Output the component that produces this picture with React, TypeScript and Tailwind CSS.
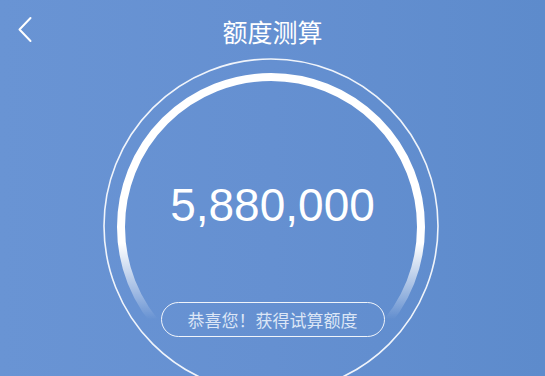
const CJK = "font-['Noto_Sans_CJK_SC','Noto_Sans',sans-serif]";

function Ring() {
  return (
    <svg
      className="pointer-events-none absolute inset-0"
      width="545"
      height="376"
      viewBox="0 0 545 376"
    >
      <defs>
        <linearGradient id="arcFade" x1="0" y1="76" x2="0" y2="380" gradientUnits="userSpaceOnUse">
          <stop offset="0" stopColor="#ffffff" stopOpacity="1" />
          <stop offset="0.55" stopColor="#ffffff" stopOpacity="1" />
          <stop offset="0.73" stopColor="#ffffff" stopOpacity="0.3" />
          <stop offset="0.8" stopColor="#ffffff" stopOpacity="0" />
        </linearGradient>
      </defs>
      <circle cx="271" cy="226" r="167" fill="none" stroke="#ffffff" strokeOpacity="0.9" strokeWidth="1.6" />
      <circle cx="271" cy="227" r="150" fill="none" stroke="url(#arcFade)" strokeWidth="8" />
    </svg>
  );
}

function BackIcon() {
  return (
    <svg width="16" height="28" viewBox="0 0 16 28" fill="none">
      <path d="M13.5 2 L2.5 13.5 L13.5 25" stroke="#ffffff" strokeWidth="2" strokeLinecap="round" strokeLinejoin="round" />
    </svg>
  );
}

export default function App() {
  return (
    <div className="relative h-[376px] w-[545px] overflow-hidden bg-gradient-to-r from-[#6994d4] via-[#6590d1] to-[#5d8bcc]">
      <Ring />
      <header className="relative flex h-[62px] items-center justify-center">
        <button className="absolute left-[17px] top-[16px]">
          <BackIcon />
        </button>
        <h1 className={`${CJK} text-[25px] font-normal leading-none text-white`}>额度测算</h1>
      </header>
      <main className="relative flex flex-col items-center">
        <div className="mt-[120px] font-['Liberation_Sans',Arial,sans-serif] text-[46px] leading-none text-white">
          5,880,000
        </div>
        <div
          className={`${CJK} mt-[74px] flex h-[35px] w-[224px] items-center justify-center rounded-full border-[1.5px] border-white/90 text-[17px] leading-none text-[#dce6f6]`}
        >
          恭喜您！获得试算额度
        </div>
      </main>
    </div>
  );
}
